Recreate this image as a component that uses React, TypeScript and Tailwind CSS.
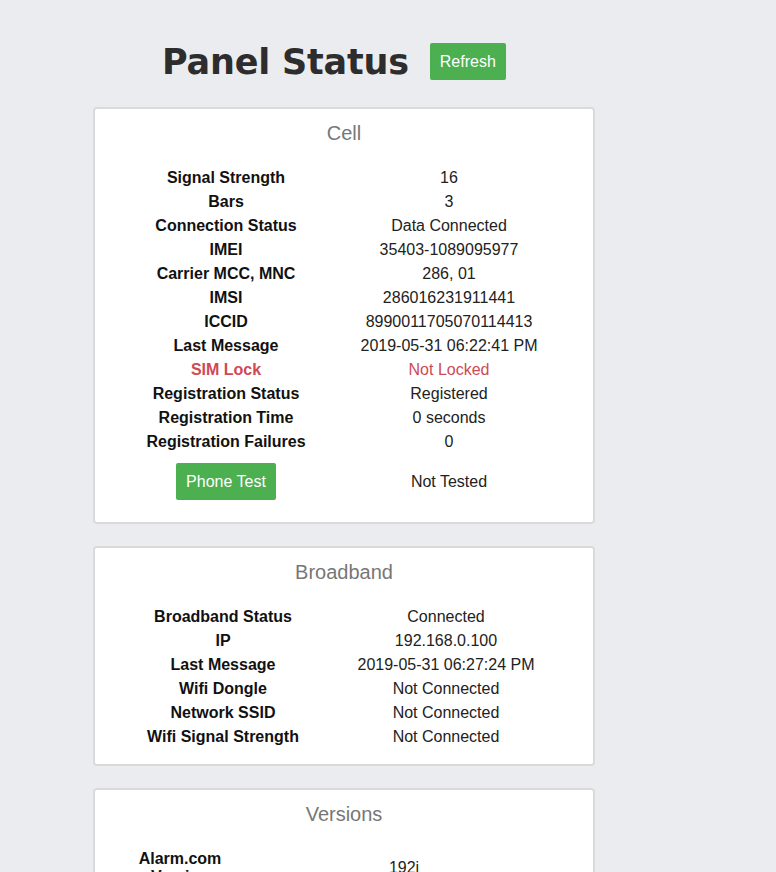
import React from "react";

type Row = { label: string; value: string; red?: boolean };

const cellRows: Row[] = [
  { label: "Signal Strength", value: "16" },
  { label: "Bars", value: "3" },
  { label: "Connection Status", value: "Data Connected" },
  { label: "IMEI", value: "35403-1089095977" },
  { label: "Carrier MCC, MNC", value: "286, 01" },
  { label: "IMSI", value: "286016231911441" },
  { label: "ICCID", value: "8990011705070114413" },
  { label: "Last Message", value: "2019-05-31 06:22:41 PM" },
  { label: "SIM Lock", value: "Not Locked", red: true },
  { label: "Registration Status", value: "Registered" },
  { label: "Registration Time", value: "0 seconds" },
  { label: "Registration Failures", value: "0" },
];

const broadbandRows: Row[] = [
  { label: "Broadband Status", value: "Connected" },
  { label: "IP", value: "192.168.0.100" },
  { label: "Last Message", value: "2019-05-31 06:27:24 PM" },
  { label: "Wifi Dongle", value: "Not Connected" },
  { label: "Network SSID", value: "Not Connected" },
  { label: "Wifi Signal Strength", value: "Not Connected" },
];

function Rows({ rows }: { rows: Row[] }) {
  return (
    <>
      {rows.map((r) => (
        <React.Fragment key={r.label}>
          <div
            className={`py-[3px] leading-[18px] font-bold text-center ${
              r.red ? "text-[#cf4a54]" : "text-[#111]"
            }`}
          >
            {r.label}
          </div>
          <div
            className={`py-[3px] leading-[18px] text-center ${
              r.red ? "text-[#cf4a54]" : "text-[#222]"
            }`}
          >
            {r.value}
          </div>
        </React.Fragment>
      ))}
    </>
  );
}

function Card({ title, children }: { title: string; children: React.ReactNode }) {
  return (
    <div className="border-2 border-[#dadada] rounded-[4px] bg-white pt-[12px] pb-[15px]">
      <div className="text-center text-[20px] leading-[24px] text-[#777]">{title}</div>
      <div className="mt-[21px]">{children}</div>
    </div>
  );
}

export default function App() {
  return (
    <div
      className="min-h-screen bg-[#ebecef] text-[16px]"
      style={{ fontFamily: '"Liberation Sans", Arial, sans-serif' }}
    >
      <div className="pl-[93px] w-[595px]">
        <div className="flex items-center h-[107px] pl-[69px] pt-[16px]">
          <h1
            className="text-[35px] font-bold text-[#2d2d2d] leading-[40px] tracking-[-0.2px]"
            style={{ fontFamily: '"DejaVu Sans", sans-serif' }}
          >
            Panel Status
          </h1>
          <button className="ml-[21px] h-[37px] w-[76px] bg-[#4caf50] text-white text-[16px] rounded-[2px]">
            Refresh
          </button>
        </div>

        <div className="flex flex-col gap-[22px]">
          <Card title="Cell">
            <div className="grid grid-cols-[200px_246px] ml-[31px]">
              <Rows rows={cellRows} />
              <div className="flex justify-center pt-[9px] pb-[7px]">
                <button className="h-[37px] w-[100px] bg-[#4caf50] text-white text-[16px] rounded-[2px]">
                  Phone Test
                </button>
              </div>
              <div className="flex items-center justify-center pt-[9px] pb-[7px] text-[#222]">
                Not Tested
              </div>
            </div>
          </Card>

          <Card title="Broadband">
            <div className="grid grid-cols-[200px_246px] ml-[28px]">
              <Rows rows={broadbandRows} />
            </div>
          </Card>

          <Card title="Versions">
            <div className="grid grid-cols-[100px_348px] ml-[35px]">
              <div className="py-[3px] leading-[18px] font-bold text-center text-[#111] flex items-center justify-center">
                Alarm.com Version
              </div>
              <div className="py-[3px] leading-[18px] text-center text-[#222] flex items-center justify-center">
                192i
              </div>
              <div className="py-[3px] leading-[18px] font-bold text-center text-[#111]">Panel Version</div>
              <div className="py-[3px] leading-[18px] text-center text-[#222]">1.0</div>
            </div>
          </Card>
        </div>
      </div>
    </div>
  );
}
